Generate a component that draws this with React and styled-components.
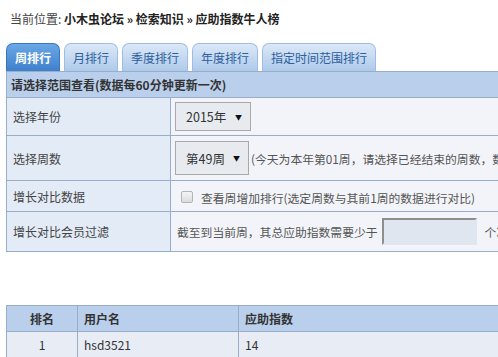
import React from 'react';
import styled, { createGlobalStyle } from 'styled-components';

const Global = createGlobalStyle`
	html, body {
		margin: 0;
		padding: 0;
		background: #fff;
		overflow: hidden;
	}
	body {
		font-family: "Noto Sans CJK SC", "Noto Sans", sans-serif;
		font-size: 12px;
		color: #333;
	}
`;

const tabs = ['周排行', '月排行', '季度排行', '年度排行', '指定时间范围排行'];

const App = () => (
	<Page>
		<Global />
		<Breadcrumb>
			当前位置: <b>小木虫论坛 » 检索知识 » 应助指数牛人榜</b>
		</Breadcrumb>
		<TabBar>
			{tabs.map((t, i) => (
				<Tab key={t} active={i === 0}>{t}</Tab>
			))}
		</TabBar>
		<FormTable>
			<tbody>
				<tr>
					<HeadCell colSpan={2} h={25}>请选择范围查看(数据每60分钟更新一次)</HeadCell>
				</tr>
				<tr>
					<LabelCell h={37}>选择年份</LabelCell>
					<ValueCell>
						<Select h={29} w={76}>2015年<Arrow>▼</Arrow></Select>
					</ValueCell>
				</tr>
				<tr>
					<LabelCell h={44}>选择周数</LabelCell>
					<ValueCell>
						<Select h={34} w={74}>第49周<Arrow>▼</Arrow></Select>
						<Note>(今天为本年第01周，请选择已经结束的周数，数据统计到上周日)</Note>
					</ValueCell>
				</tr>
				<tr>
					<LabelCell h={30}>增长对比数据</LabelCell>
					<ValueCell>
						<Check />
						<Note>查看周增加排行(选定周数与其前1周的数据进行对比)</Note>
					</ValueCell>
				</tr>
				<tr>
					<LabelCell h={39}>增长对比会员过滤</LabelCell>
					<ValueCell>
						<Note>截至到当前周，其总应助指数需要少于</Note>
						<Input />
						<Note>个次</Note>
					</ValueCell>
				</tr>
			</tbody>
		</FormTable>
		<RankTable>
			<colgroup>
				<col style={{ width: 71 }} />
				<col style={{ width: 161 }} />
				<col />
			</colgroup>
			<thead>
				<tr>
					<RankHead center>排名</RankHead>
					<RankHead>用户名</RankHead>
					<RankHead>应助指数</RankHead>
				</tr>
			</thead>
			<tbody>
				<tr>
					<RankCell center>1</RankCell>
					<RankCell>hsd3521</RankCell>
					<RankCell>14</RankCell>
				</tr>
			</tbody>
		</RankTable>
	</Page>
);

export default App;

const Page = styled.div`
	padding: 11px 0 0 6px;
	width: 700px;
`;

const Breadcrumb = styled.div`
	padding-left: 4px;
	height: 16px;
	line-height: 16px;
	color: #444;
	b {
		color: #222;
	}
`;

const TabBar = styled.div`
	display: flex;
	gap: 4px;
	margin-top: 16px;
	height: 28px;
	align-items: flex-end;
`;

const Tab = styled.div`
	height: 27px;
	line-height: 27px;
	padding: 0 8px;
	border: 1px solid ${p => (p.active ? '#3a76bf' : '#9fbde2')};
	border-bottom: none;
	border-radius: 7px 7px 0 0;
	font-size: 12px;
	font-weight: ${p => (p.active ? 'bold' : 'normal')};
	color: ${p => (p.active ? '#fff' : '#2d5e9e')};
	background: ${p =>
		p.active
			? 'linear-gradient(#6aa7e6, #3f80cc)'
			: 'linear-gradient(#dbe8f7, #aecaea)'};
`;

const FormTable = styled.table`
	border-collapse: collapse;
	width: 640px;
	border-top: 1px solid #7e9cc4;
	td {
		border: 1px solid #97adc9;
		padding: 0;
	}
`;

const HeadCell = styled.td`
	height: ${p => p.h}px;
	background: #b9cfeb;
	font-weight: bold;
	padding-left: 4px !important;
	color: #333;
	font-size: 12px;
`;

const LabelCell = styled.td`
	width: 157px;
	height: ${p => p.h}px;
	background: #e3ebf6;
	padding-left: 6px !important;
	color: #444;
`;

const ValueCell = styled.td`
	background: #f2f4f9;
	padding-left: 4px !important;
	color: #555;
	white-space: nowrap;
	font-size: 11.8px;
`;

const Select = styled.span`
	display: inline-flex;
	align-items: center;
	justify-content: space-between;
	box-sizing: border-box;
	width: ${p => p.w}px;
	height: ${p => p.h}px;
	padding: 0 8px 0 10px;
	vertical-align: middle;
	border: 1px solid #a9a9a9;
	background: #e7ebf0;
	color: #333;
	font-size: 12.5px;
`;

const Arrow = styled.span`
	font-size: 7px;
	color: #111;
`;

const Note = styled.span`
	vertical-align: middle;
	margin-left: 2px;
`;

const Check = styled.span`
	display: inline-block;
	box-sizing: border-box;
	width: 12px;
	height: 12px;
	margin: 0 6px 0 6px;
	vertical-align: middle;
	border: 1px solid #b5b5b5;
	border-radius: 2px;
	background: linear-gradient(#f4f4f4, #dcdcdc);
`;

const Input = styled.span`
	display: inline-block;
	box-sizing: border-box;
	width: 95px;
	height: 27px;
	margin: 0 6px 0 4px;
	vertical-align: middle;
	border: 2px solid #bdbdbd;
	border-right-color: #e0e6ef;
	border-bottom-color: #e0e6ef;
	border-left-color: #8e8e8e;
	border-top-color: #8e8e8e;
	background: #dfe6f0;
`;

const RankTable = styled.table`
	border-collapse: collapse;
	width: 640px;
	margin-top: 53px;
	border-top: 1px solid #7e9cc4;
`;

const RankHead = styled.th`
	height: 25px;
	padding: 0 6px;
	background: #b9cfeb;
	border: 1px solid #97adc9;
	text-align: ${p => (p.center ? 'center' : 'left')};
	font-weight: bold;
	color: #333;
`;

const RankCell = styled.td`
	height: 25px;
	padding: 0 6px;
	background: #e7ecf5;
	border: 1px solid #97adc9;
	text-align: ${p => (p.center ? 'center' : 'left')};
	color: #333;
`;
